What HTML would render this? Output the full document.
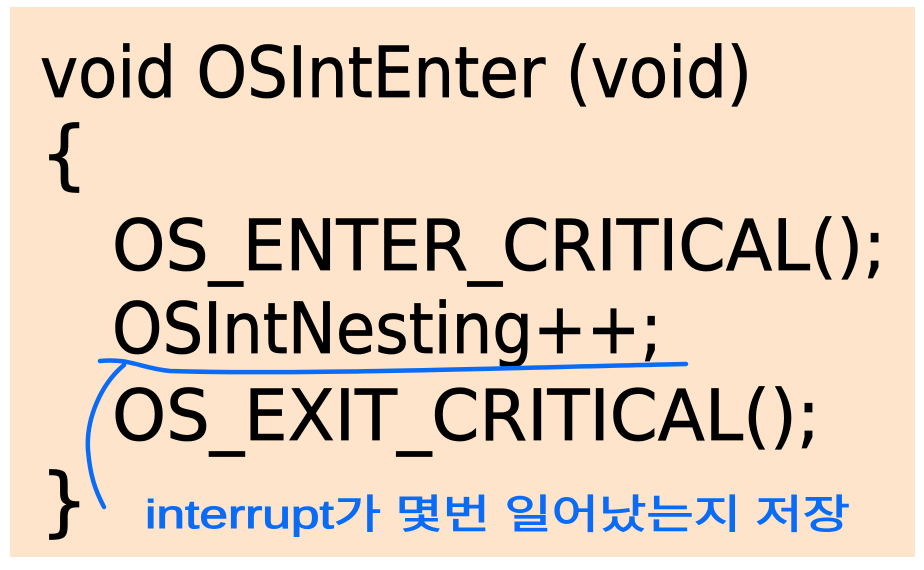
<!DOCTYPE html>
<html><head><meta charset="utf-8"><style>
html,body{margin:0;padding:0;background:#fff;width:924px;height:570px;overflow:hidden}
</style></head><body>
<svg width="924" height="570" xmlns="http://www.w3.org/2000/svg">
<rect x="10" y="7" width="905" height="550" fill="#FDE4CB"/>
<g font-family="DejaVu Sans, Liberation Sans, sans-serif" font-size="70" fill="#000" stroke="#000" stroke-width="0.8">
<text x="40" y="97" textLength="712" lengthAdjust="spacingAndGlyphs">void OSIntEnter (void)</text>
<text x="40" y="180" font-size="76">{</text>
<text x="112" y="270" textLength="774" lengthAdjust="spacingAndGlyphs">OS_ENTER_CRITICAL();</text>
<text x="112" y="353" textLength="550" lengthAdjust="spacingAndGlyphs">OSIntNesting++;</text>
<text x="112" y="440" textLength="708" lengthAdjust="spacingAndGlyphs">OS_EXIT_CRITICAL();</text>
<text x="40" y="527" font-size="76">}</text>
</g>
<g fill="none" stroke="#0a6cf5" stroke-width="4.5" stroke-linecap="round">
<path d="M100 361 C130 358 140 368 170 371 C300 375 500 368 686 364"/>
<path d="M124 365 C100 385 86 420 88 450 C90 475 95 490 104 507"/>
</g>
<text x="145" y="528" font-family="Liberation Sans, Noto Sans CJK KR, sans-serif" font-size="40" fill="#0a6cf5" stroke="#0a6cf5" stroke-width="1" textLength="705" lengthAdjust="spacingAndGlyphs">interrupt가 몇번 일어났는지 저장</text>
</svg>
</body></html>
